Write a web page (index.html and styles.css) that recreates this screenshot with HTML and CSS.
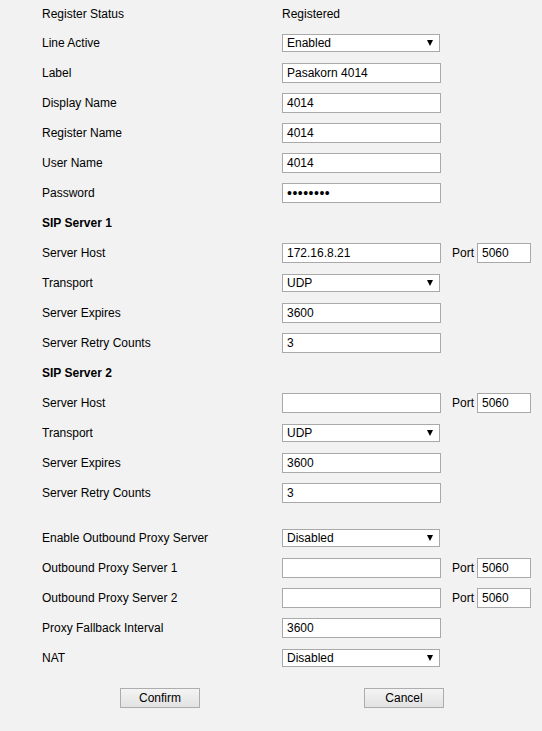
FILE: index.html
```html
<!DOCTYPE html>
<html>
<head>
<meta charset="utf-8">
<link rel="stylesheet" href="styles.css">
</head>
<body>
<div class="form">
  <div class="row first"><span class="lbl">Register Status</span><span class="val">Registered</span></div>
  <div class="row"><span class="lbl">Line Active</span><span class="sel"><select><option>Enabled</option></select></span></div>
  <div class="row"><span class="lbl">Label</span><input class="txt" type="text" value="Pasakorn 4014"></div>
  <div class="row"><span class="lbl">Display Name</span><input class="txt" type="text" value="4014"></div>
  <div class="row"><span class="lbl">Register Name</span><input class="txt" type="text" value="4014"></div>
  <div class="row"><span class="lbl">User Name</span><input class="txt" type="text" value="4014"></div>
  <div class="row"><span class="lbl">Password</span><input class="txt pw" type="password" value="12345678"></div>
  <div class="row"><span class="lbl head">SIP Server 1</span></div>
  <div class="row"><span class="lbl">Server Host</span><input class="txt" type="text" value="172.16.8.21"><span class="port">Port</span><input class="ptxt" type="text" value="5060"></div>
  <div class="row"><span class="lbl">Transport</span><span class="sel"><select><option>UDP</option></select></span></div>
  <div class="row"><span class="lbl">Server Expires</span><input class="txt" type="text" value="3600"></div>
  <div class="row"><span class="lbl">Server Retry Counts</span><input class="txt" type="text" value="3"></div>
  <div class="row"><span class="lbl head">SIP Server 2</span></div>
  <div class="row"><span class="lbl">Server Host</span><input class="txt" type="text" value=""><span class="port">Port</span><input class="ptxt" type="text" value="5060"></div>
  <div class="row"><span class="lbl">Transport</span><span class="sel"><select><option>UDP</option></select></span></div>
  <div class="row"><span class="lbl">Server Expires</span><input class="txt" type="text" value="3600"></div>
  <div class="row"><span class="lbl">Server Retry Counts</span><input class="txt" type="text" value="3"></div>
  <div class="row gap"><span class="lbl">Enable Outbound Proxy Server</span><span class="sel"><select><option>Disabled</option></select></span></div>
  <div class="row"><span class="lbl">Outbound Proxy Server 1</span><input class="txt" type="text" value=""><span class="port">Port</span><input class="ptxt" type="text" value="5060"></div>
  <div class="row"><span class="lbl">Outbound Proxy Server 2</span><input class="txt" type="text" value=""><span class="port">Port</span><input class="ptxt" type="text" value="5060"></div>
  <div class="row"><span class="lbl">Proxy Fallback Interval</span><input class="txt" type="text" value="3600"></div>
  <div class="row"><span class="lbl">NAT</span><span class="sel"><select><option>Disabled</option></select></span></div>
  <div class="buttons">
    <button class="btn confirm">Confirm</button>
    <button class="btn cancel">Cancel</button>
  </div>
</div>
</body>
</html>
```
FILE: styles.css
```css
html, body {
  margin: 0;
  padding: 0;
  background: #f2f2f2;
}
body {
  font-family: "Liberation Sans", Arial, sans-serif;
  font-size: 12px;
  color: #000;
}
.form {
  padding-left: 42px;
}
.row {
  display: flex;
  align-items: center;
  height: 30px;
}
.row.first {
  height: 28px;
}
.row.gap {
  margin-top: 15px;
}
.lbl {
  width: 240px;
  flex: none;
}
.head {
  font-weight: bold;
}
.val {
  line-height: 14px;
}
.txt, .ptxt {
  box-sizing: border-box;
  height: 20px;
  width: 159px;
  margin: 0;
  padding: 0 4px;
  border: 1px solid #a9a9a9;
  background: #fff;
  font-family: "Liberation Sans", Arial, sans-serif;
  font-size: 12px;
  color: #000;
  outline: none;
}
.txt.pw {
  font-size: 14px;
  letter-spacing: 0.5px;
}
.ptxt {
  width: 54px;
}
.port {
  margin-left: 11px;
  margin-right: 3px;
}
.sel {
  position: relative;
  display: inline-block;
  height: 18px;
}
.sel select {
  -webkit-appearance: none;
  appearance: none;
  box-sizing: border-box;
  width: 158px;
  height: 18px;
  margin: 0;
  padding: 0 4px;
  border: 1px solid #a9a9a9;
  border-radius: 0;
  background: #fff;
  font-family: "Liberation Sans", Arial, sans-serif;
  font-size: 12px;
  color: #000;
  outline: none;
}
.sel::after {
  content: "";
  position: absolute;
  right: 7px;
  top: 6px;
  border-left: 3px solid transparent;
  border-right: 3px solid transparent;
  border-top: 6px solid #000;
  pointer-events: none;
}
.buttons {
  display: flex;
  margin-top: 15px;
}
.btn {
  box-sizing: border-box;
  width: 80px;
  height: 20px;
  margin: 0;
  padding: 0;
  border: 1px solid #adadad;
  border-radius: 0;
  background: linear-gradient(#f4f4f4, #e2e2e2);
  font-family: "Liberation Sans", Arial, sans-serif;
  font-size: 12px;
  color: #000;
}
.confirm {
  margin-left: 78px;
}
.cancel {
  margin-left: 164px;
}
```
